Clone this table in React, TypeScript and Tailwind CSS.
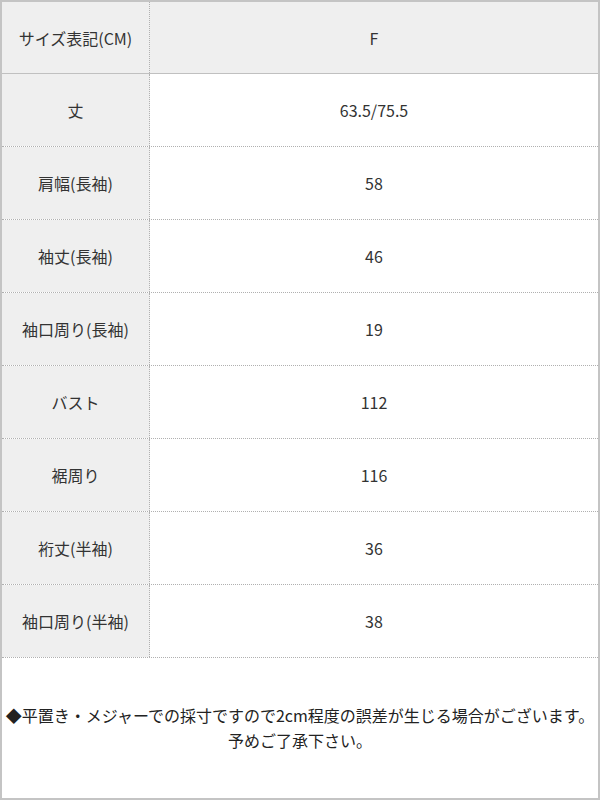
import React from "react";

const rows: [string, string][] = [
  ["丈", "63.5/75.5"],
  ["肩幅(長袖)", "58"],
  ["袖丈(長袖)", "46"],
  ["袖口周り(長袖)", "19"],
  ["バスト", "112"],
  ["裾周り", "116"],
  ["裄丈(半袖)", "36"],
  ["袖口周り(半袖)", "38"],
];

export default function App() {
  return (
    <div
      className="w-[600px] h-[800px] bg-white border-2 border-[#c4c4c4] flex flex-col text-[16px] text-[#333]"
      style={{ fontFamily: '"Noto Sans CJK JP", "Noto Sans", sans-serif' }}
    >
      <div className="flex h-[72px] bg-[#efefef] border-b border-[#c0c0c0] shrink-0">
        <div className="w-[148px] flex items-center justify-center border-r border-dotted border-[#b0b0b0]">
          サイズ表記(CM)
        </div>
        <div className="flex-1 flex items-center justify-center">F</div>
      </div>
      {rows.map(([k, v]) => (
        <div key={k} className="flex h-[73px] border-b border-dotted border-[#b0b0b0] shrink-0">
          <div className="w-[148px] bg-[#efefef] flex items-center justify-center border-r border-dotted border-[#b0b0b0]">
            {k}
          </div>
          <div className="flex-1 flex items-center justify-center">{v}</div>
        </div>
      ))}
      <div className="flex-1 flex flex-col items-center justify-center leading-[25px] text-[#222]">
        <div className="whitespace-nowrap">◆平置き・メジャーでの採寸ですので2cm程度の誤差が生じる場合がございます。</div>
        <div>予めご了承下さい。</div>
      </div>
    </div>
  );
}
